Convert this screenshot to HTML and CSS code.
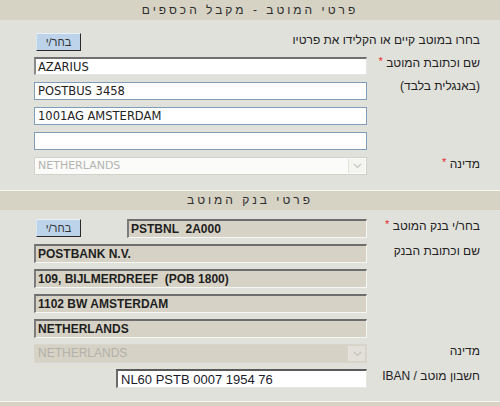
FILE: index.html
```html
<!DOCTYPE html>
<html lang="he" dir="rtl">
<head>
<meta charset="utf-8">
<title>פרטי המוטב</title>
<link rel="stylesheet" href="styles.css">
</head>
<body>
<div class="page">
  <div class="bar">פרטי המוטב - מקבל הכספים</div>
  <div class="section sec1">
    <div class="row-full">
      <span class="label">בחרו במוטב קיים או הקלידו את פרטיו</span>
      <button class="btn" type="button">בחר/י</button>
    </div>
    <div class="label label-tall span4">שם וכתובת המוטב <span class="req">*</span><br>(באנגלית בלבד)</div>
    <input class="field field-focus" type="text" value="AZARIUS">
    <input class="field" type="text" value="POSTBUS 3458">
    <input class="field" type="text" value="1001AG AMSTERDAM">
    <input class="field" type="text" value="">
    <div class="label">מדינה <span class="req">*</span></div>
    <div class="select select-light">
      <span class="select-text">NETHERLANDS</span>
      <span class="select-arrow"><svg width="9" height="6" viewBox="0 0 9 6"><path d="M1 1 L4.5 4.5 L8 1" fill="none" stroke="#c4c4c0" stroke-width="1.2"/></svg></span>
    </div>
  </div>
  <div class="bar bar-line">פרטי בנק המוטב</div>
  <div class="section sec2">
    <div class="label">בחר/י בנק המוטב <span class="req">*</span></div>
    <div class="cell-split">
      <input class="field field-ro code" type="text" value="PSTBNL  2A000" readonly>
      <button class="btn" type="button">בחר/י</button>
    </div>
    <div class="label span4">שם וכתובת הבנק</div>
    <input class="field field-ro" type="text" value="POSTBANK N.V." readonly>
    <input class="field field-ro" type="text" value="109, BIJLMERDREEF  (POB 1800)" readonly>
    <input class="field field-ro" type="text" value="1102 BW AMSTERDAM" readonly>
    <input class="field field-ro" type="text" value="NETHERLANDS" readonly>
    <div class="label">מדינה</div>
    <div class="select select-dark">
      <span class="select-text">NETHERLANDS</span>
      <span class="select-arrow"><svg width="9" height="6" viewBox="0 0 9 6"><path d="M1 1 L4.5 4.5 L8 1" fill="none" stroke="#c4c4bc" stroke-width="1.2"/></svg></span>
    </div>
    <div class="label">חשבון מוטב / IBAN</div>
    <div class="cell-start">
      <input class="field field-iban" type="text" value="NL60 PSTB 0007 1954 76">
    </div>
  </div>
  <div class="bar bar-line bar-foot"></div>
</div>
</body>
</html>
```

FILE: styles.css
```css
html, body {
  margin: 0;
  padding: 0;
}
body {
  background: #e1e1dc;
  font-family: "Liberation Sans", Arial, sans-serif;
  font-size: 12px;
  color: #222;
  width: 500px;
  height: 406px;
  overflow: hidden;
}
.page {
  direction: rtl;
}
.bar {
  height: 20px;
  line-height: 20px;
  background: #d6d3c5;
  text-align: center;
  letter-spacing: 3px;
  color: #2e2e2e;
  font-size: 12px;
}
.bar-line {
  border-top: 1px solid #f6f6f2;
  height: 19px;
  line-height: 19px;
}
.bar-foot {
  height: 10px;
}
.section {
  display: grid;
  grid-template-columns: 113px 333px;
  row-gap: 7px;
  padding: 0 20px 0 34px;
  align-items: start;
}
.sec1 {
  padding-top: 13px;
  padding-bottom: 15px;
}
.sec2 {
  padding-top: 9px;
  padding-bottom: 13px;
  row-gap: 6px;
}
.sec2 .field, .sec2 .select {
  height: 19px;
}
.row-full {
  grid-column: 1 / -1;
  display: flex;
  justify-content: space-between;
  align-items: flex-start;
  height: 18px;
  margin-bottom: -1px;
}
.label {
  line-height: 14px;
  white-space: nowrap;
  color: #222;
}
.label-tall {
  line-height: 23px;
  margin-top: -5px;
}
.span4 {
  grid-row: span 4;
}
.req {
  color: #e0282a;
  font-size: 11px;
  position: relative;
  top: -2px;
}
.btn {
  width: 45px;
  height: 18px;
  margin: 0 0 0 2px;
  padding: 0;
  background: #bcd3ea;
  border: 1px solid;
  border-color: #e8f0f8 #2a2a2a #2a2a2a #d8e6f4;
  font-family: "Liberation Sans", Arial, sans-serif;
  font-size: 11px;
  color: #333;
  line-height: 15px;
  direction: rtl;
}
.field {
  box-sizing: border-box;
  width: 333px;
  height: 18px;
  margin: 0;
  padding: 0 0 0 3px;
  direction: ltr;
  text-align: left;
  background: #fff;
  border: 1px solid #7f9db9;
  font-family: "DejaVu Sans", Verdana, sans-serif;
  font-size: 11.5px;
  color: #222;
  outline: none;
}
.field-focus {
  border-width: 2px 1px 1px 2px;
  border-color: #707070 #e4e4e4 #e4e4e4 #8a8a8a;
  padding-left: 2px;
}
.field-ro {
  background: #d6d3c6;
  border-style: solid;
  border-width: 2px 1px 1px 2px;
  border-color: #6e6e6e #f6f6f2 #f6f6f2 #7c7c7c;
  font-family: "Liberation Sans", Arial, sans-serif;
  font-weight: bold;
  font-size: 12px;
  color: #1e1e1e;
  padding-left: 2px;
}
.cell-split {
  display: flex;
  justify-content: space-between;
  align-items: flex-start;
}
.cell-split .code {
  width: 240px;
}
.cell-start {
  display: flex;
  justify-content: flex-start;
}
.field-iban {
  width: 251px;
  border-width: 2px 1px 1px 2px;
  border-color: #5a5a5a #e6e6e0 #e6e6e0 #6a6a6a;
  font-family: "Liberation Sans", Arial, sans-serif;
  font-size: 13px;
  color: #1a1a2a;
  padding-left: 3px;
}
.select {
  box-sizing: border-box;
  width: 333px;
  height: 18px;
  display: flex;
  direction: ltr;
  align-items: stretch;
  border: 1px solid #d2d2cc;
}
.select-light {
  background: #fbfbf9;
}
.select-dark {
  background: #d6d3c6;
  border-color: #d8d6cc;
}
.select-text {
  flex: 1;
  padding-left: 3px;
  line-height: 16px;
  font-family: "DejaVu Sans", Verdana, sans-serif;
  font-size: 11px;
  color: #b4b4b0;
}
.select-dark .select-text {
  font-family: "Liberation Sans", Arial, sans-serif;
  font-size: 12px;
  color: #b2b0a8;
}
.select-arrow {
  width: 16px;
  display: flex;
  align-items: center;
  justify-content: center;
  border-left: 1px solid #e4e4de;
  background: #f4f4f0;
  margin: 1px;
}
.select-dark .select-arrow {
  background: #e2e0d8;
  border-left-color: #e6e4dc;
}
```
